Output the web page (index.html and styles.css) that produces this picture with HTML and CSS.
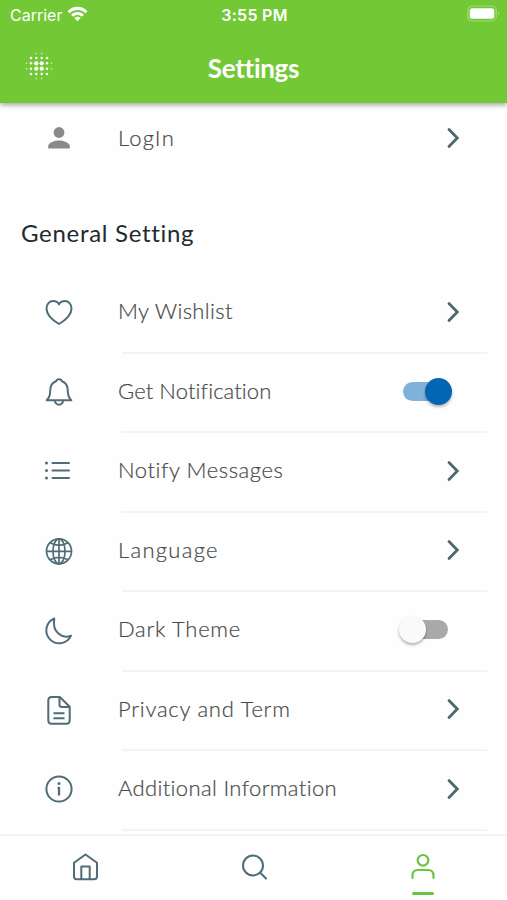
FILE: index.html
```html
<!DOCTYPE html>
<html lang="en">
<head>
<meta charset="utf-8">
<title>Settings</title>
<link rel="stylesheet" href="styles.css">
</head>
<body>
<div class="app">
  <header class="header">
    <div class="status">
      <div class="carrier"><span>Carrier</span>
        <svg width="21" height="16" viewBox="0 0 21 16" fill="#fff"><path d="M.5 5.2C6-.6 15-.6 20.500 5.200L18.400 7.300C14 2.900 7 2.900 2.600 7.300Z"/><path d="M4 8.700C7.600 5 13.400 5 17 8.700L14.900 10.800C12.400 8.300 8.600 8.300 6.100 10.800Z"/><path d="M7.300 12.100C9.100 10.400 11.900 10.400 13.700 12.100L10.500 15.300Z"/></svg>
      </div>
      <span class="time">3:55 PM</span>
      <svg class="battery" width="34" height="18" viewBox="0 0 34 18"><rect x=".8" y="1" width="28.500" height="15" rx="4.500" fill="none" stroke="#fff" stroke-opacity=".35" stroke-width="1.200"/><rect x="2.800" y="3.300" width="24.500" height="10.400" rx="2.500" fill="#fff"/><path d="M31 6.500q2 2 0 4.200z" fill="#fff" fill-opacity=".42"/></svg>
    </div>
    <div class="bar">
      <svg class="dots" width="28" height="28" viewBox="0 0 28 28" fill="#fff">
        <g><circle cx="11.300" cy="11.300" r="2.100"/><circle cx="16.700" cy="11.300" r="2.100"/><circle cx="11.300" cy="16.700" r="2.100"/><circle cx="16.700" cy="16.700" r="2.100"/></g>
        <g><circle cx="6" cy="6" r="1.250"/><circle cx="11.300" cy="6" r="1.250"/><circle cx="16.700" cy="6" r="1.250"/><circle cx="22" cy="6" r="1.250"/><circle cx="6" cy="11.300" r="1.250"/><circle cx="22" cy="11.300" r="1.250"/><circle cx="6" cy="16.700" r="1.250"/><circle cx="22" cy="16.700" r="1.250"/><circle cx="6" cy="22" r="1.250"/><circle cx="11.300" cy="22" r="1.250"/><circle cx="16.700" cy="22" r="1.250"/><circle cx="22" cy="22" r="1.250"/></g>
        <g opacity=".8"><circle cx="11.300" cy="1.500" r=".7"/><circle cx="16.700" cy="1.500" r=".7"/><circle cx="11.300" cy="26.500" r=".7"/><circle cx="16.700" cy="26.500" r=".7"/><circle cx="1.500" cy="11.300" r=".7"/><circle cx="1.500" cy="16.700" r=".7"/><circle cx="26.500" cy="11.300" r=".7"/><circle cx="26.500" cy="16.700" r=".7"/></g>
      </svg>
      <h1 class="title">Settings</h1>
    </div>
  </header>

  <main class="content">
    <div class="row login">
      <svg class="icon" viewBox="0 0 30 30"><circle cx="15" cy="9.500" r="5.400" fill="#8a8a8a"/><path d="M4.200 25.500v-2.300c0-3.800 7-5.700 10.800-5.700s10.800 1.900 10.800 5.700v2.300z" fill="#8a8a8a"/></svg>
      <span class="label l-login">LogIn</span>
      <svg class="chev" viewBox="0 0 14 22"><path d="M3 2.500 11.300 11 3 19.500"/></svg>
    </div>
    <h2 class="section">General Setting</h2>
    <div class="list">
      <div class="row">
        <svg class="icon" viewBox="0 0 30 30"><path d="M15 27C10 24 2.500 18.500 2.500 11.500C2.500 7 5.500 4 9 4C11.800 4 14 5.200 15 7.400C16 5.200 18.200 4 21 4C24.500 4 27.500 7 27.500 11.500C27.500 18.500 20 24 15 27Z"/></svg>
        <span class="label l-wish">My Wishlist</span>
        <svg class="chev" viewBox="0 0 14 22"><path d="M3 2.500 11.300 11 3 19.500"/></svg>
      </div>
      <div class="row">
        <svg class="icon" viewBox="0 0 30 30"><path d="M2.700 24.300C5.500 21.500 6.200 18.500 6.200 15C6.200 9.500 8.500 6.500 12 5.300C12.800 2.500 17.200 2.500 18 5.300C21.500 6.500 23.800 9.500 23.800 15C23.800 18.500 24.500 21.500 27.300 24.300Z"/><path d="M11 24.500C11 30 19 30 19 24.500"/></svg>
        <span class="label l-notif">Get Notification</span>
        <span class="switch on"><span class="knob"></span></span>
      </div>
      <div class="row">
        <svg class="icon list-icon" viewBox="0 0 30 30"><path d="M8.500 7H25M8.500 14.500H25M8.500 22H25" stroke-linecap="round"/><g class="fill"><circle cx="2.500" cy="7" r="1.500"/><circle cx="2.500" cy="14.500" r="1.500"/><circle cx="2.500" cy="22" r="1.500"/></g></svg>
        <span class="label l-msg">Notify Messages</span>
        <svg class="chev" viewBox="0 0 14 22"><path d="M3 2.500 11.300 11 3 19.500"/></svg>
      </div>
      <div class="row">
        <svg class="icon globe" viewBox="0 0 30 30"><circle cx="15" cy="16.300" r="12.500"/><ellipse cx="15" cy="16.300" rx="6" ry="12.500"/><path d="M15 3.800V28.800M2.500 16.300H27.500M6 7.800Q15 12.800 24 7.800M6 24.800Q15 19.800 24 24.800"/></svg>
        <span class="label l-lang">Language</span>
        <svg class="chev" viewBox="0 0 14 22"><path d="M3 2.500 11.300 11 3 19.500"/></svg>
      </div>
      <div class="row">
        <svg class="icon" viewBox="0 0 30 30"><path d="M10.300 3.500A12.900 12.900 0 1 0 27 20.700C18 24 7.800 17.500 10.300 3.500Z"/></svg>
        <span class="label l-dark">Dark Theme</span>
        <span class="switch off"><span class="knob"></span></span>
      </div>
      <div class="row">
        <svg class="icon" viewBox="0 0 30 30"><path d="M15.800 3H7.800Q4.300 3 4.300 6.500V26.300Q4.300 29.800 7.800 29.800H22.200Q25.700 29.800 25.700 26.300V12.800Z"/><path d="M15.500 3.300V10.800Q15.500 13.100 17.800 13.100H25.500M9.500 19.300H20.500M9.500 24.300H20.500"/></svg>
        <span class="label l-priv">Privacy and Term</span>
        <svg class="chev" viewBox="0 0 14 22"><path d="M3 2.500 11.300 11 3 19.500"/></svg>
      </div>
      <div class="row">
        <svg class="icon" viewBox="0 0 30 30"><circle cx="15" cy="15" r="12.600"/><path d="M13.600 13.800H15V21.500" stroke-width="2.300"/><circle class="fill" cx="15" cy="9.500" r="1.500"/></svg>
        <span class="label l-info">Additional Information</span>
        <svg class="chev" viewBox="0 0 14 22"><path d="M3 2.500 11.300 11 3 19.500"/></svg>
      </div>
    </div>
  </main>

  <nav class="nav">
    <div class="tab"><svg width="30" height="32" viewBox="0 0 30 32"><path d="M4 11.700 15.500 3.500 27 11.700V25.500Q27 28.200 24.300 28.200H6.700Q4 28.200 4 25.500Z"/><path d="M11.300 28V15.500H19.700V28"/></svg></div>
    <div class="tab"><svg width="30" height="32" viewBox="0 0 30 32"><circle cx="14" cy="14.500" r="10"/><path d="M21.300 21.800 27 27.500"/></svg></div>
    <div class="tab active"><svg width="30" height="32" viewBox="0 0 30 32"><circle cx="15" cy="9.300" r="5.300"/><path d="M4.500 27V24.500Q4.500 19 10 19H20Q25.500 19 25.500 24.500V27" stroke-linecap="round"/></svg><span class="mark"></span></div>
  </nav>
</div>
</body>
</html>
```

FILE: styles.css
```css
* { box-sizing: border-box; }
body { margin: 0; background: #fefefe; font-family: Lato, "Open Sans", sans-serif; }
svg { display: block; flex: none; overflow: visible; }
.app { width: 507px; height: 900px; display: flex; flex-direction: column; overflow: hidden; }

.header { flex: none; height: 103px; background: #72c935; color: #fff; box-shadow: 0 2px 5px rgba(0, 0, 0, .36); z-index: 1; }
.status { height: 30px; padding: 0 8px 0 10px; display: grid; grid-template-columns: 1fr auto 1fr; align-items: center; font: 500 16px/30px Inter, sans-serif; }
.carrier { display: flex; align-items: center; gap: 5px; font-weight: 400; letter-spacing: 0; }
.carrier svg { margin-top: -2px; }
.time { letter-spacing: .3px; font-weight: 600; }
.battery { justify-self: end; margin: -2px -2px 0 0; }
.bar { height: 73px; padding: 0 25px; display: grid; grid-template-columns: 28px 1fr 28px; align-items: center; }
.dots { margin-bottom: 1px; }
.title { margin: 2px 0 0; text-align: center; font-size: 26px; font-weight: 700; line-height: 32px; letter-spacing: -.3px; }

.content { flex: 1; min-height: 0; overflow: hidden; }
.row { height: 79.5px; padding: 0 47px 0 44px; display: grid; grid-template-columns: 30px 1fr auto; column-gap: 44px; align-items: center; }
.list .row { background: linear-gradient(#f2f3f4, #f2f3f4) 122px 0 / 365px 2px no-repeat; }
.list .row:first-child { background: none; }
.list::after { content: ""; display: block; height: 2px; margin: 0 20px 0 122px; background: #f2f3f4; }
.login { height: 70px; }
.section { margin: 44px 0 0; padding-left: 21px; height: 55px; font-size: 24px; line-height: 32px; font-weight: 400; letter-spacing: .7px; color: #222b2e; }
.icon { width: 30px; height: 30px; fill: none; stroke: #4f6c78; stroke-width: 2; stroke-linejoin: round; }
.login .icon { stroke: none; }
.globe { stroke-width: 1.7; }
.fill { fill: #4f6c78; stroke: none; }
.label { margin-top: -1px; font-size: 22px; line-height: 30px; font-weight: 300; color: #484a4a; white-space: nowrap; -webkit-text-stroke: .2px #484a4a; }
.l-login { letter-spacing: 1.2px; }
.l-wish { letter-spacing: .35px; }
.l-notif { letter-spacing: .1px; }
.l-msg { letter-spacing: .55px; }
.l-lang { letter-spacing: 1.3px; }
.l-dark { letter-spacing: .7px; }
.l-priv { letter-spacing: .75px; }
.l-info { letter-spacing: .35px; }
.chev { width: 14px; height: 22px; fill: none; stroke: #4f6870; stroke-width: 2.8; stroke-linecap: round; }

.switch { display: flex; align-items: center; width: 46px; height: 19px; border-radius: 10px; }
.knob { width: 27px; height: 27px; border-radius: 50%; flex: none; box-shadow: 0 2px 3px rgba(0, 0, 0, .3); }
.on { background: #7fb2da; margin-right: 11px; justify-content: flex-end; }
.on .knob { background: #0366b5; margin-right: -3px; }
.off { background: #a9a9a9; margin-right: 12px; }
.off .knob { background: #fafafa; margin-left: -3px; }

.nav { flex: none; height: 66px; border-top: 2px solid #f4f4f5; display: grid; grid-template-columns: repeat(3, 1fr); justify-items: center; }
.tab { padding-top: 15px; display: flex; flex-direction: column; align-items: center; }
.tab svg { fill: none; stroke: #4f6c78; stroke-width: 2; stroke-linejoin: round; stroke-linecap: round; }
.active svg { stroke: #6cc33f; stroke-width: 2.200; }
.mark { width: 22px; height: 2.500px; margin-top: 9px; border-radius: 2px; background: #6cc33f; }
```
